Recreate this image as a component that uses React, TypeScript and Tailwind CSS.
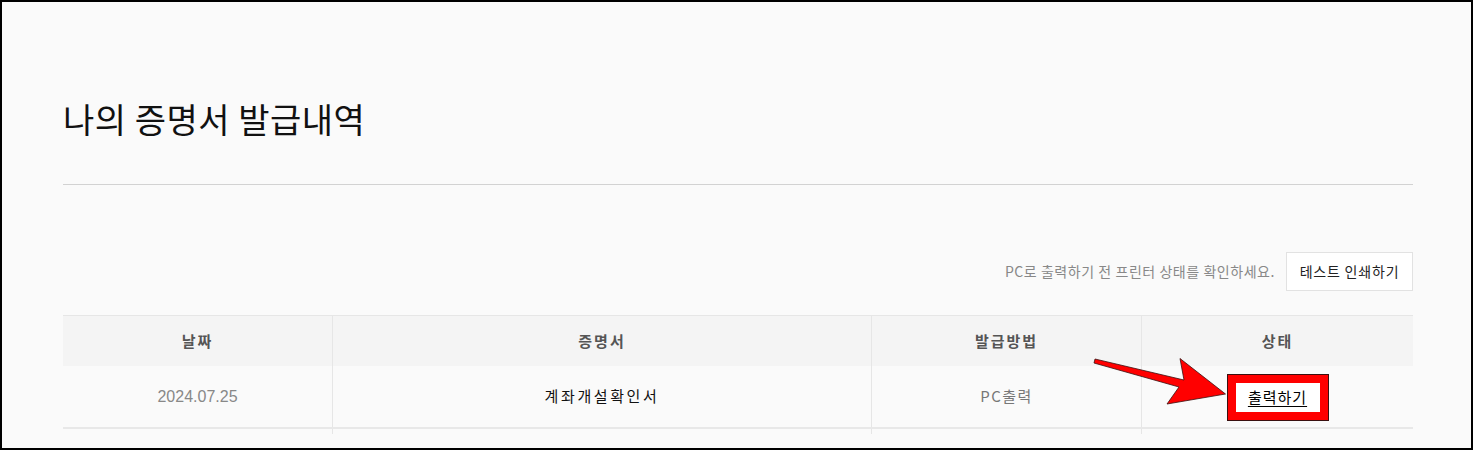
import React from 'react';

const font = { fontFamily: '"Noto Sans CJK KR", "Noto Sans", sans-serif' };

const columns = [
    { title: "날짜", width: "w-[270px]" },
    { title: "증명서", width: "w-[539px]" },
    { title: "발급방법", width: "w-[270px]" },
    { title: "상태", width: "w-[271px]" },
];

const Arrow = () => (
    <svg className='absolute left-[1080px] top-[340px]' width="160" height="80" viewBox="0 0 160 80">
        <polygon
            points="13,17 102,38 98,16.5 143.5,52 85,62 97,45 12,21"
            fill="#ff0000" stroke="#3a1010" strokeWidth="0.8" strokeLinejoin="miter" />
    </svg>
);

const App = () => {
    return (
        <div className='relative h-[450px] w-[1473px] box-border border-2 border-black bg-[#fafafa] overflow-hidden' style={font}>
            <div className='ml-[61px] w-[1350px]'>
                <h1 className='pt-[95px] text-[34px] leading-[44px] tracking-[0.5px] text-[#111] font-normal'>나의 증명서 발급내역</h1>
                <div className='mt-[43px] h-px bg-[#d2d2d2]' />

                <div className='mt-[67px] flex items-center justify-end gap-[11px]'>
                    <span className='text-[14px] text-[#888] tracking-[0.55px]'>PC로 출력하기 전 프린터 상태를 확인하세요.</span>
                    <button className='w-[127px] h-[39px] bg-white border border-[#e2e2e2] text-[14px] text-[#222] tracking-[0.8px]'>테스트 인쇄하기</button>
                </div>

                <div className='mt-[24px] border-t border-[#e6e6e6]'>
                    <div className='flex h-[50px] bg-[#f4f4f4]'>
                        {columns.map((c, i) => (
                            <div key={i} className={`${c.width} flex items-center justify-center text-[15px] font-bold text-[#555] tracking-[2px] ${i < 3 ? 'border-r border-[#e6e6e6]' : ''}`}>{c.title}</div>
                        ))}
                    </div>
                    <div className='flex h-[63px] border-b-2 border-[#e8e8e8]'>
                        <div className='w-[270px] flex items-center justify-center border-r border-[#e6e6e6] text-[16px] text-[#888]' style={{ fontFamily: '"Liberation Sans", sans-serif' }}>2024.07.25</div>
                        <div className='w-[539px] flex items-center justify-center border-r border-[#e6e6e6] text-[15px] text-[#111] tracking-[2.6px]'>계좌개설확인서</div>
                        <div className='w-[270px] flex items-center justify-center border-r border-[#e6e6e6] text-[15px] text-[#777] tracking-[1.5px]'>PC출력</div>
                        <div className='w-[271px] flex items-center justify-center'>
                            <button className='w-[100px] h-[45px] box-border border-[8px] border-[#ff0000] outline outline-1 outline-[#3a1010] bg-white text-[15px] text-black tracking-[1px] underline underline-offset-[3px] mt-[2px]'>출력하기</button>
                        </div>
                    </div>
                    <div className='flex h-[5px]'>
                        <div className='w-[270px] border-r border-[#e6e6e6]' />
                        <div className='w-[539px] border-r border-[#e6e6e6]' />
                        <div className='w-[270px] border-r border-[#e6e6e6]' />
                    </div>
                </div>
            </div>
            <Arrow />
        </div>
    );
};

export default App;
